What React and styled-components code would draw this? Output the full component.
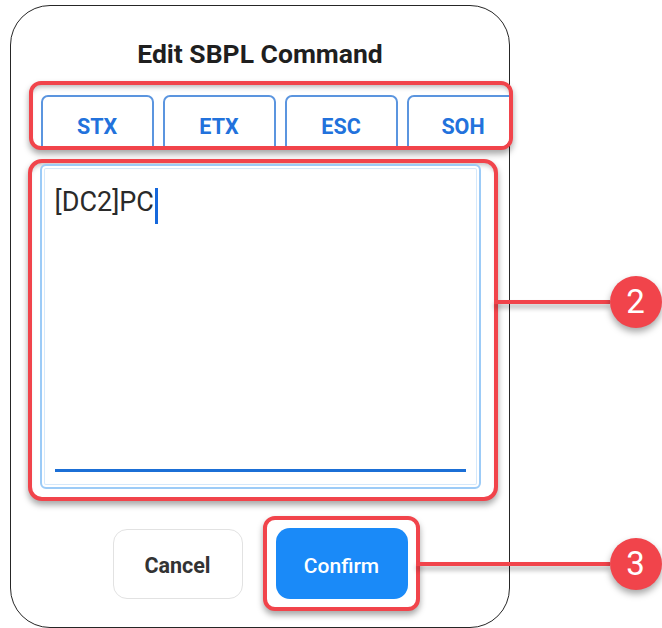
import styled, { createGlobalStyle } from "styled-components";

const GlobalStyle = createGlobalStyle`
  html, body {
    margin: 0;
    padding: 0;
    background: #ffffff;
    overflow: hidden;
  }
  body {
    font-family: Roboto, "Noto Sans", "Liberation Sans", sans-serif;
  }
`;

const Page = styled.div`
  width: 662px;
  height: 628px;
  padding: 5px 0 0 10px;
  box-sizing: border-box;
`;

const Frame = styled.div`
  width: 500px;
  height: 623px;
  box-sizing: border-box;
  border: 1.5px solid #262626;
  border-radius: 40px;
  background: #ffffff;
  display: flex;
  flex-direction: column;
  align-items: flex-start;
`;

const Title = styled.h1`
  align-self: stretch;
  margin: 33px 0 0;
  font-size: 26.5px;
  line-height: 30px;
  font-weight: 700;
  color: #1f1f1f;
  text-align: center;
`;

// red annotation frame drawn over the screenshot
const Highlight = styled.div`
  position: relative;
  box-sizing: border-box;
  margin: ${(p) => p.$margin};
  width: ${(p) => p.$width}px;
  height: ${(p) => p.$height}px;
  border: 4px solid #f1444b;
  border-radius: ${(p) => p.$radius || 12}px;
  box-shadow: 0 4px 6px rgba(0, 0, 0, 0.35);
  background: #ffffff;
`;

const Callout = styled.div`
  position: absolute;
  left: 100%;
  top: ${(p) => p.$top || "50%"};
  transform: translateY(-50%);
  display: flex;
  align-items: center;
`;

const Line = styled.div`
  width: ${(p) => p.$length}px;
  height: 4px;
  background: #f1444b;
  box-shadow: 0 4px 5px rgba(0, 0, 0, 0.3);
`;

const Badge = styled.div`
  flex-shrink: 0;
  width: 52px;
  height: 52px;
  border-radius: 50%;
  background: #f1444b;
  color: #ffffff;
  font-size: 33px;
  line-height: 52px;
  text-align: center;
  box-shadow: 0 4px 7px rgba(0, 0, 0, 0.35);
`;

const KeyRow = styled.div`
  height: 100%;
  display: flex;
  gap: 9px;
  padding: 10px 0 0 8px;
  box-sizing: border-box;
  overflow: hidden;
  border-radius: 8px;
  box-shadow: inset 0 5px 5px -3px rgba(0, 0, 0, 0.28);
`;

const KeyButton = styled.button`
  flex-shrink: 0;
  width: 113px;
  height: 60px;
  box-sizing: border-box;
  border: 2px solid #5b95df;
  border-radius: 7px;
  background: #ffffff;
  color: #2272dc;
  font-family: inherit;
  font-size: 21.5px;
  font-weight: 700;
  padding: 2px 0 0;
`;

const EditorWrap = styled.div`
  height: 100%;
  box-sizing: border-box;
  padding: 1px 13px 8px 8px;
  border-radius: 10px;
  box-shadow: inset 0 5px 5px -3px rgba(0, 0, 0, 0.25);
`;

const Editor = styled.div`
  height: 100%;
  box-sizing: border-box;
  border: 2px solid #9ccbf7;
  border-radius: 6px;
  box-shadow: inset 0 0 0 2px #ffffff, inset 0 0 0 3px #d4e8fb;
  display: flex;
  flex-direction: column;
  padding: 20px 13px 15px;
`;

const EditorText = styled.div`
  font-size: 27px;
  line-height: 32px;
  color: #2a2a2a;
`;

const Caret = styled.span`
  display: inline-block;
  width: 3px;
  height: 36px;
  margin-left: 1px;
  vertical-align: -13px;
  background: #1668dc;
`;

const Underline = styled.div`
  margin-top: auto;
  height: 3px;
  background: #1b6fd6;
`;

const Footer = styled.div`
  display: flex;
  align-items: center;
  gap: 20px;
  margin: 15px 0 0 101.5px;
`;

const ActionButton = styled.button`
  box-sizing: border-box;
  width: ${(p) => p.$width}px;
  height: ${(p) => p.$height}px;
  border-radius: 14px;
  border: ${(p) => (p.$primary ? "none" : "1.5px solid #e2e2e2")};
  background: ${(p) => (p.$primary ? "#1a8af8" : "#ffffff")};
  color: ${(p) => (p.$primary ? "#ffffff" : "#333333")};
  font-family: inherit;
  font-size: ${(p) => (p.$primary ? 21 : 21.5)}px;
  font-weight: ${(p) => (p.$primary ? 500 : 700)};
  padding: 4px 0 0;
`;

const ConfirmBox = styled(Highlight)`
  padding: 8px 8px 8px 9px;
  border-radius: 12px;
`;

const keys = ["STX", "ETX", "ESC", "SOH"];

const App = () => {
  return (
    <>
      <GlobalStyle />
      <Page>
        <Frame>
          <Title>Edit SBPL Command</Title>
          <Highlight $margin="12px 0 0 17.5px" $width={484} $height={69}>
            <KeyRow>
              {keys.map((k) => (
                <KeyButton key={k}>{k}</KeyButton>
              ))}
            </KeyRow>
          </Highlight>
          <Highlight
            $margin="9px 0 0 16.5px"
            $width={470}
            $height={342}
            $radius={14}
          >
            <EditorWrap>
              <Editor>
                <EditorText>
                  [DC2]PC
                  <Caret />
                </EditorText>
                <Underline />
              </Editor>
            </EditorWrap>
            <Callout $top="139px">
              <Line $length={116} />
              <Badge>2</Badge>
            </Callout>
          </Highlight>
          <Footer>
            <ActionButton $width={130} $height={70}>
              Cancel
            </ActionButton>
            <ConfirmBox $width={157} $height={95}>
              <ActionButton $primary $width={132} $height={71}>
                Confirm
              </ActionButton>
              <Callout>
                <Line $length={194} />
                <Badge>3</Badge>
              </Callout>
            </ConfirmBox>
          </Footer>
        </Frame>
      </Page>
    </>
  );
};

export default App;
